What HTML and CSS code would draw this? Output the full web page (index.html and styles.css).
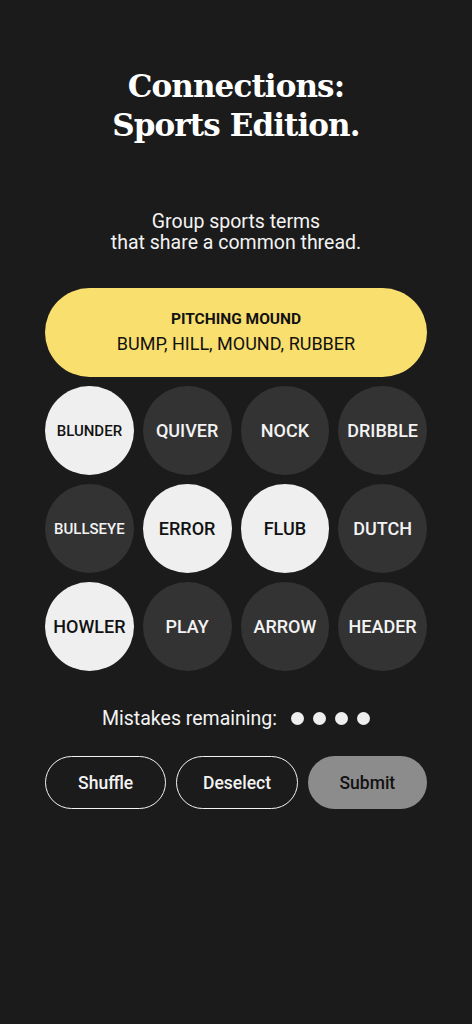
FILE: index.html
```html
<!DOCTYPE html>
<html lang="en">
  <head>
    <meta charset="UTF-8" />
    <meta name="viewport" content="width=device-width, initial-scale=1.0" />
    <title>Connections: Sports Edition</title>
    <link rel="stylesheet" href="styles.css">
  </head>
  <body>
    <section class="game">
      <h1 class="title">Connections:<br>Sports Edition.</h1>
      <p class="intro">Group sports terms<br>that share a common thread.</p>

      <div class="board">
        <div class="solved">
          <h3>PITCHING MOUND</h3>
          <p>BUMP, HILL, MOUND, RUBBER</p>
        </div>
        <div class="grid">
          <button class="tile selected small">BLUNDER</button>
          <button class="tile">QUIVER</button>
          <button class="tile">NOCK</button>
          <button class="tile">DRIBBLE</button>
          <button class="tile small">BULLSEYE</button>
          <button class="tile selected">ERROR</button>
          <button class="tile selected">FLUB</button>
          <button class="tile">DUTCH</button>
          <button class="tile selected">HOWLER</button>
          <button class="tile">PLAY</button>
          <button class="tile">ARROW</button>
          <button class="tile">HEADER</button>
        </div>
      </div>

      <div class="mistakes">
        <span>Mistakes remaining:</span>
        <span class="dots"><i></i><i></i><i></i><i></i></span>
      </div>

      <div class="actions">
        <button class="outline">Shuffle</button>
        <button class="outline">Deselect</button>
        <button class="submit">Submit</button>
      </div>
    </section>
  </body>
</html>
```

FILE: styles.css
```css
html, body{
  padding: 0;
  margin: 0;
  background-color: #1b1b1b;
  color: #f3f3f3;
  font-family: Roboto, "Liberation Sans", sans-serif;
}

.game{
  width: 382px;
  margin: 0 auto;
  padding-top: 67px;
}

.title{
  margin: 0;
  text-align: center;
  font-family: "DejaVu Serif", "Liberation Serif", serif;
  font-weight: bold;
  font-size: 31px;
  line-height: 39px;
  letter-spacing: -0.9px;
  color: #fff;
}

.intro{
  margin: 66px 0 0;
  text-align: center;
  font-size: 19.5px;
  line-height: 21px;
}

.board{
  margin-top: 35px;
  display: flex;
  flex-direction: column;
  gap: 9px;
}

.solved{
  height: 89px;
  border-radius: 45px;
  background-color: #f9df6d;
  color: #121212;
  display: flex;
  flex-direction: column;
  justify-content: center;
  align-items: center;
  padding-bottom: 2px;
  box-sizing: border-box;
}
.solved h3{
  margin: 0;
  font-size: 15.5px;
  font-weight: bold;
}
.solved p{
  margin: 5px 0 0;
  font-size: 18px;
}

.grid{
  display: grid;
  grid-template-columns: repeat(4, 1fr);
  gap: 9px;
}

.tile{
  height: 89px;
  border: none;
  border-radius: 50%;
  background-color: #333333;
  color: #f3f3f3;
  font-family: Roboto, "Liberation Sans", sans-serif;
  font-size: 18px;
  font-weight: 500;
  padding: 0;
}
.tile.small{
  font-size: 15px;
}
.tile.selected{
  background-color: #efefef;
  color: #121212;
}

.mistakes{
  margin-top: 36px;
  display: flex;
  justify-content: center;
  align-items: center;
  gap: 14px;
  font-size: 19.5px;
}
.dots{
  display: flex;
  gap: 9px;
}
.dots i{
  width: 13px;
  height: 13px;
  border-radius: 50%;
  background-color: #efefef;
}

.actions{
  margin-top: 26px;
  display: flex;
  gap: 10px;
}
.actions button{
  flex: 1;
  height: 53px;
  border-radius: 27px;
  font-family: Roboto, "Liberation Sans", sans-serif;
  font-size: 17.5px;
  font-weight: 500;
}
.outline{
  background: none;
  border: 1.5px solid #f3f3f3;
  color: #f3f3f3;
}
.submit{
  border: none;
  background-color: #8c8c8c;
  color: #121212;
}
```
